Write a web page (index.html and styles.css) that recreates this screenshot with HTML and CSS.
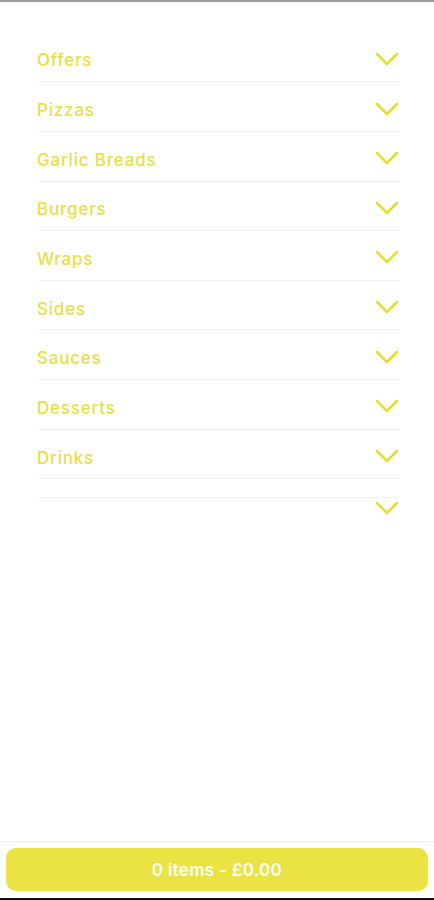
FILE: index.html
```html
<!DOCTYPE html>
<html lang="en">
<head>
    <meta charset="UTF-8">
    <meta name="viewport" content="width=device-width, initial-scale=1.0">
    <title>Menu</title>
    <link rel="stylesheet" href="styles.css">
</head>
<body>
    <div class="topbar"></div>
    <div class="menu">
        <div class="row"><span class="name">Offers</span><svg class="chev" viewBox="0 0 24 14"><path d="M2 2 L12 12 L22 2"/></svg></div>
        <div class="row"><span class="name">Pizzas</span><svg class="chev" viewBox="0 0 24 14"><path d="M2 2 L12 12 L22 2"/></svg></div>
        <div class="row"><span class="name">Garlic Breads</span><svg class="chev" viewBox="0 0 24 14"><path d="M2 2 L12 12 L22 2"/></svg></div>
        <div class="row"><span class="name">Burgers</span><svg class="chev" viewBox="0 0 24 14"><path d="M2 2 L12 12 L22 2"/></svg></div>
        <div class="row"><span class="name">Wraps</span><svg class="chev" viewBox="0 0 24 14"><path d="M2 2 L12 12 L22 2"/></svg></div>
        <div class="row"><span class="name">Sides</span><svg class="chev" viewBox="0 0 24 14"><path d="M2 2 L12 12 L22 2"/></svg></div>
        <div class="row"><span class="name">Sauces</span><svg class="chev" viewBox="0 0 24 14"><path d="M2 2 L12 12 L22 2"/></svg></div>
        <div class="row"><span class="name">Desserts</span><svg class="chev" viewBox="0 0 24 14"><path d="M2 2 L12 12 L22 2"/></svg></div>
        <div class="row"><span class="name">Drinks</span><svg class="chev" viewBox="0 0 24 14"><path d="M2 2 L12 12 L22 2"/></svg></div>
        <div class="row empty"></div>
        <div class="tail"><svg class="chev" viewBox="0 0 24 14"><path d="M2 2 L12 12 L22 2"/></svg></div>
    </div>
    <div class="footer">
        <button class="basket">0 items - £0.00</button>
    </div>
    <div class="bottombar"></div>
</body>
</html>
```

FILE: styles.css
```css
html, body {
    margin: 0;
    padding: 0;
}
body {
    font-family: Inter, "Noto Sans", sans-serif;
    background-color: #fff;
    height: 900px;
    display: flex;
    flex-direction: column;
}
.topbar {
    height: 2px;
    background-color: #9b9b9b;
}
.menu {
    flex: 1;
    padding: 30.6px 34px 0 37px;
}
.row {
    height: 48.65px;
    border-bottom: 1px solid #f0f0f0;
    display: flex;
    align-items: center;
    justify-content: space-between;
}
.row.empty {
    height: 18px;
}
.name {
    color: #e8de45;
    font-size: 17px;
    font-weight: 500;
    letter-spacing: 0.8px;
    margin-top: 7px;
}
.chev {
    width: 24px;
    height: 14px;
    margin-right: 1px;
    margin-top: 4px;
    fill: none;
    stroke: #e6dc2e;
    stroke-width: 2.5;
    stroke-linecap: round;
    stroke-linejoin: round;
}
.tail {
    display: flex;
    justify-content: flex-end;
    margin-top: -1px;
}
.footer {
    border-top: 1px solid #f0f0f0;
    padding: 6px 6px 7px 6px;
}
.basket {
    display: block;
    width: 100%;
    height: 43px;
    border: none;
    border-radius: 10px;
    background-color: #ebe243;
    color: #fff;
    font-family: Inter, "Noto Sans", sans-serif;
    font-size: 17px;
    font-weight: 600;
    letter-spacing: 0.3px;
}
.bottombar {
    height: 2px;
    background-color: #111;
}
```
